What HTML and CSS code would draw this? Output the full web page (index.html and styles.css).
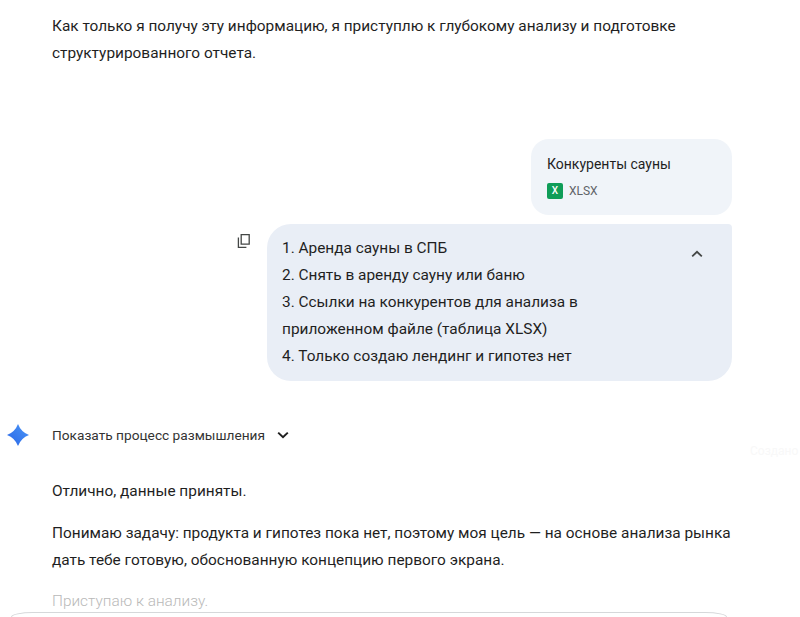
FILE: index.html
```html
<!DOCTYPE html>
<html lang="ru">
<head>
<meta charset="utf-8">
<title>Чат</title>
<link rel="stylesheet" href="styles.css">
</head>
<body>
<main class="chat">
  <section class="answer intro">
    <p>Как только я получу эту информацию, я приступлю к глубокому анализу и подготовке структурированного отчета.</p>
  </section>

  <section class="user">
    <div class="file-card">
      <div class="file-name">Конкуренты сауны</div>
      <div class="file-type"><span class="xl">X</span><span>XLSX</span></div>
    </div>
    <div class="prompt-row">
      <svg class="copy" viewBox="0 0 16 16" aria-hidden="true"><path d="M5.2 1.6h8v9.6h-8z"/><path d="M2.4 4.4v10h8"/></svg>
      <div class="prompt">
        <div class="prompt-text">
          <div>1. Аренда сауны в СПБ</div>
          <div>2. Снять в аренду сауну или баню</div>
          <div>3. Ссылки на конкурентов для анализа в приложенном файле (таблица XLSX)</div>
          <div>4. Только создаю лендинг и гипотез нет</div>
        </div>
        <svg class="caret-up" viewBox="0 0 12 8" aria-hidden="true"><path d="M1.2 6.4 6 1.8l4.8 4.6"/></svg>
      </div>
    </div>
  </section>

  <section class="thinking">
    <svg class="spark" viewBox="0 0 24 24" aria-hidden="true">
      <defs><linearGradient id="g" x1="0" y1="1" x2="1" y2="0"><stop offset="0" stop-color="#2a66e6"/><stop offset="1" stop-color="#4b96f7"/></linearGradient></defs>
      <path fill="url(#g)" d="M12 1Q15 9 23 12 15 15 12 23 9 15 1 12 9 9 12 1z"/>
    </svg>
    <span class="thinking-label">Показать процесс размышления</span>
    <svg class="caret-down" viewBox="0 0 12 8" aria-hidden="true"><path d="M1.200 1.600 6 6.200l4.800-4.600"/></svg>
  </section>

  <section class="answer reply">
    <p>Отлично, данные приняты.</p>
    <p>Понимаю задачу: продукта и гипотез пока нет, поэтому моя цель — на основе анализа рынка дать тебе готовую, обоснованную концепцию первого экрана.</p>
    <p class="fading">Приступаю к анализу.</p>
  </section>
</main>
<div class="ghost">Создано</div>
<div class="input-box"></div>
</body>
</html>
```

FILE: styles.css
```css
* { box-sizing: border-box; }
html, body { margin: 0; height: 100%; }
body {
  position: relative;
  overflow: hidden;
  background: #fff;
  color: #1f1f1f;
  font-family: Roboto, "Liberation Sans", sans-serif;
  font-size: 15.4px;
  line-height: 27px;
}
p { margin: 0; }
.chat { width: 800px; height: 617px; overflow: hidden; padding-top: 13px; }
.answer { padding-left: 52px; width: 736px; }
.intro { height: 126px; }
.user { display: flex; flex-direction: column; align-items: flex-end; gap: 9px; width: 732px; }
.file-card {
  width: 201px; height: 76px;
  padding: 14px 16px;
  background: #f0f4f9;
  border-radius: 18px;
}
.file-name { font-size: 14px; line-height: 22px; }
.file-type { display: flex; align-items: center; gap: 6px; margin-top: 8px; font-size: 12px; line-height: 16px; color: #5f6368; }
.xl {
  display: flex; align-items: center; justify-content: center;
  width: 16px; height: 16px; border-radius: 2px;
  background: #0f9d58; color: #fff; font-size: 10px; font-weight: 500;
}
.prompt-row { display: flex; align-items: flex-start; gap: 15px; }
.copy { width: 16px; height: 16px; margin-top: 9px; fill: none; stroke: #444746; stroke-width: 1.300; }
.prompt {
  display: flex; justify-content: space-between; align-items: flex-start;
  width: 465px; height: 157px;
  padding: 11px 29px 0 15px;
  background: #e9eef6;
  border-radius: 24px 4px 24px 24px;
}
.prompt-text { width: 320px; }
.caret-up { width: 12px; height: 8px; margin-top: 15px; fill: none; stroke: #444746; stroke-width: 1.800; }
.thinking { display: flex; align-items: center; height: 24px; margin-top: 42px; padding-left: 6px; }
.spark { width: 24px; height: 24px; }
.thinking-label { margin-left: 22px; font-size: 13.700px; color: #333; }
.caret-down { width: 12px; height: 8px; margin-left: 12px; fill: none; stroke: #1f1f1f; stroke-width: 2; }
.reply { display: flex; flex-direction: column; gap: 15px; margin-top: 31px; }
.fading { margin-top: -1px; color: #b9b9b9; font-weight: 300; }
.ghost { position: absolute; left: 750px; top: 442px; font-size: 12px; line-height: 18px; color: #f8f8f8; }
.input-box {
  position: absolute; left: 11px; top: 612px;
  width: 716px; height: 5px;
  background: #fff;
  border: 1px solid #d6d8da;
  border-bottom: 0;
  border-radius: 22px 22px 0 0 / 5px 5px 0 0;
}
```
